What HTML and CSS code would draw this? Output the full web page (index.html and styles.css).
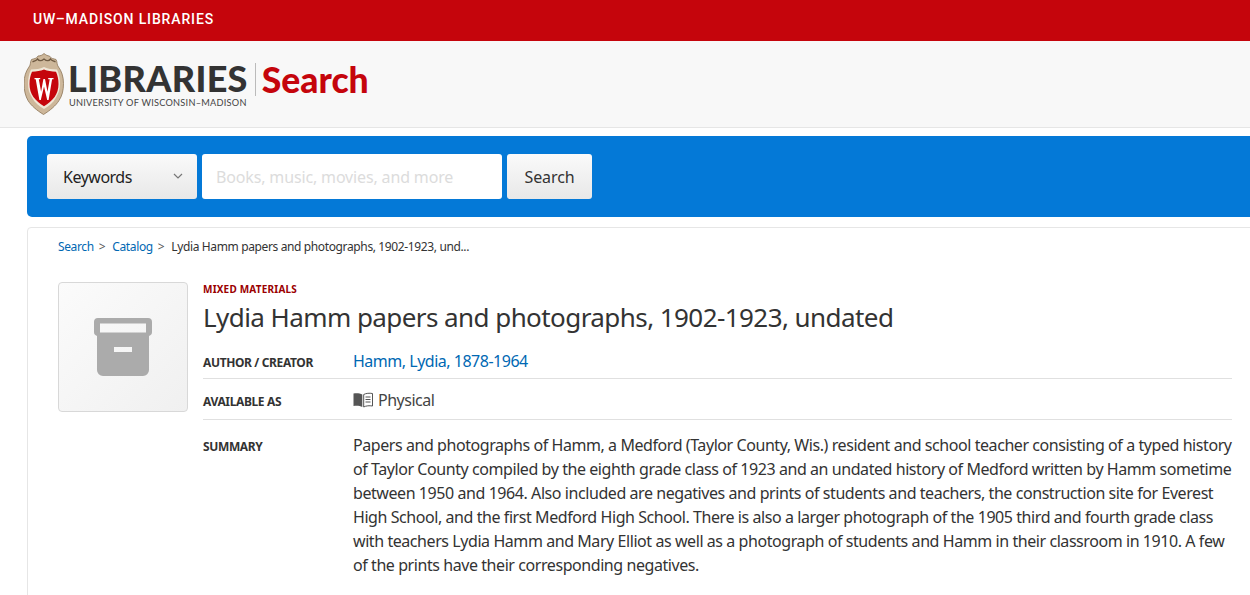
FILE: index.html
```html
<!DOCTYPE html>
<html lang="en">
<head>
<meta charset="utf-8">
<title>Lydia Hamm papers and photographs, 1902-1923, undated</title>
<link rel="stylesheet" href="styles.css">
</head>
<body>
<div class="topbar"><a class="topbar-link" href="#">UW–MADISON LIBRARIES</a></div>
<header class="site-header">
  <a class="logo" href="#">
    <svg class="crest" viewBox="0 0 40 62" width="40" height="62" aria-hidden="true">
      <path d="M20 .5c2 1.500 3.500 2.500 5.500 2.500 1.500 3 4 2.500 6.500 3.500 1.500 2.500 .5 5 2.500 7.500 3 4 5 9.500 5 16.500 0 7-1.500 12.500-4.500 17-3 5-9 10-15.500 14-6.500-4-12.500-9-15.500-14C1.500 43 0 37.500 0 30.500 0 23.500 2 18 5 14c2-2.500 1-5 2.500-7.500C10 5.500 12.500 6 14 3c2.500 0 4.500-1 6-2.500z" fill="#cdb79a" stroke="#8b7355" stroke-width=".8"/>
      <path d="M8.500 9c2-1.500 4-1 5-3 1.500 2 3.500 2.500 6.500 0 3 2.500 5 2 6.500 0 1 2 3 1.500 5 3" fill="none" stroke="#6f5a42" stroke-width="1.300"/>
      <path d="M20 14c4 1.800 8 2.500 13 2.500 2 4 3 9 3 14 0 5.500-1.300 10-4.300 14.500C29 50 25 53 20 56c-5-3-9-6-11.700-11C5.300 40.500 4 36 4 30.500c0-5 1-10 3-14 5 0 9-.7 13-2.500z" fill="#efe6d6"/>
      <path d="M20 16.500c3.500 1.500 7.500 2 12 2.200 1.600 3.500 2.500 7.500 2.500 12.300 0 5-1.300 9.200-3.900 13C28 47.500 24.200 50.700 20 53.300c-4.200-2.600-8-5.800-10.600-9.300C6.800 40.200 5.500 36 5.500 31c0-4.800.9-8.800 2.500-12.300 4.500-.2 8.500-.7 12-2.200z" fill="#c5050c"/>
      <path d="M10.500 25h5.700v1.300h-1.400l2.300 12.500 2.300-12.800h1.600l2.500 12.800 2.200-12.500h-1.500V25h5.300v1.300h-1.400L24.600 47h-1.400L20 33.500 16.800 47h-1.400L11.700 26.300h-1.200z" fill="#fff"/>
    </svg>
    <span class="wordmark">
      <span class="wordmark-main">LIBRARIES</span>
      <span class="wordmark-sub">UNIVERSITY OF WISCONSIN–MADISON</span>
    </span>
    <span class="logo-search">Search</span>
  </a>
</header>
<main class="page">
  <form class="searchbar">
    <div class="select"><span>Keywords</span>
      <svg class="chevron" viewBox="0 0 10 6" width="10" height="6" aria-hidden="true"><path d="M1 1l4 4 4-4" fill="none" stroke="#777" stroke-width="1.200"/></svg>
    </div>
    <div class="input">Books, music, movies, and more</div>
    <div class="button">Search</div>
  </form>
  <section class="card">
    <nav class="crumbs">
      <a href="#">Search</a><span class="sep">&gt;</span><a href="#">Catalog</a><span class="sep">&gt;</span><span>Lydia Hamm papers and photographs, 1902-1923, und...</span>
    </nav>
    <div class="record">
      <div class="thumb">
        <svg viewBox="0 1 60 60" width="60" height="60" aria-hidden="true">
          <path fill-rule="evenodd" d="M5 2h50a4 4 0 0 1 4 4v10a4 4 0 0 1-3 3.900V54a6 6 0 0 1-6 6H10a6 6 0 0 1-6-6V19.900A4 4 0 0 1 1 16V6a4 4 0 0 1 4-4zm2 5.500v9h46v-9zM21 31v5h18v-5z" fill="#ababab"/>
        </svg>
      </div>
      <div class="details">
        <div class="format">MIXED MATERIALS</div>
        <h1 class="title">Lydia Hamm papers and photographs, 1902-1923, undated</h1>
        <div class="row row-author">
          <div class="label">AUTHOR / CREATOR</div>
          <div class="value"><a href="#">Hamm, Lydia, 1878-1964</a></div>
        </div>
        <div class="row row-avail">
          <div class="label">AVAILABLE AS</div>
          <div class="value value-icon">
            <svg viewBox="0 0 20 16" width="20" height="16" aria-hidden="true">
              <path d="M9.300 2.500C7 1.200 3.500 1 .5 1.500V14c3-.5 6.500-.3 8.800 1z" fill="#555"/>
              <path d="M10.700 2.500C13 1.200 16.500 1 19.500 1.500V14c-3-.5-6.500-.3-8.800 1z" fill="none" stroke="#555"/>
              <path d="M12.500 5h5M12.500 7.500h5M12.500 10h5" stroke="#555"/>
            </svg>
            <span>Physical</span>
          </div>
        </div>
        <div class="row row-summary">
          <div class="label">SUMMARY</div>
          <div class="value summary-text">Papers and photographs of Hamm, a Medford (Taylor County, Wis.) resident and school teacher consisting of a typed history of Taylor County compiled by the eighth grade class of 1923 and an undated history of Medford written by Hamm sometime between 1950 and 1964. Also included are negatives and prints of students and teachers, the construction site for Everest High School, and the first Medford High School. There is also a larger photograph of the 1905 third and fourth grade class with teachers Lydia Hamm and Mary Elliot as well as a photograph of students and Hamm in their classroom in 1910. A few of the prints have their corresponding negatives.</div>
        </div>
      </div>
    </div>
  </section>
</main>
</body>
</html>
```
FILE: styles.css
```css
* { box-sizing: border-box; }
html, body { margin: 0; height: 595px; overflow: hidden; }
body { font-family: "Noto Sans", sans-serif; color: #333; background: #fff; font-size: 16px; line-height: 24px; letter-spacing: -.49px; }
a { color: #0068b3; text-decoration: none; }
.topbar { height: 41px; background: #c5050c; padding-left: 33px; display: flex; align-items: center; }
.topbar-link { font-family: "Roboto", sans-serif; color: #fff; font-size: 14px; letter-spacing: .85px; font-weight: 500; position: relative; top: -2px; }
.site-header { height: 87px; background: #f8f8f8; border-bottom: 1px solid #e6e6e6; padding: 12px 0 0 24px; }
.logo { display: flex; align-items: flex-start; }
.crest { flex: none; }
.wordmark { display: flex; flex-direction: column; margin-left: 4px; padding-top: 7px; letter-spacing: 0; }
.wordmark-main { font-family: "Lato", sans-serif; font-weight: 900; font-size: 36px; line-height: 36px; color: #333; letter-spacing: .3px; }
.wordmark-sub { font-family: "Lato", sans-serif; font-size: 9.200px; line-height: 10px; color: #444; letter-spacing: .25px; margin-top: 2px; padding-left: 1px; }
.logo-search { font-family: "Lato", sans-serif; font-weight: 900; font-size: 35.500px; line-height: 34px; letter-spacing: 0; color: #c5050c; border-left: 1px solid #bbb; margin: 10px 0 0 7px; padding-left: 6px; height: 33px; display: block; }
.page { padding-left: 27px; margin-right: -20px; }
.searchbar { margin-top: 8px; height: 81px; background: #0479d7; border-radius: 5px 0 0 5px; padding: 18px 20px; display: flex; gap: 5px; }
.select, .button { height: 45px; border-radius: 3px; background: linear-gradient(#fafafa, #e8e8e8); display: flex; align-items: center; color: #222; }
.select { width: 150px; padding: 0 14px 0 16px; justify-content: space-between; }
.chevron { margin-top: -1px; }
.input { width: 300px; height: 45px; background: #fff; border-radius: 3px; padding: 0 14px; display: flex; align-items: center; color: #dcdcdc; letter-spacing: -.15px; }
.button { width: 85px; justify-content: center; letter-spacing: -.1px; color: #333; }
.card { margin-top: 10px; border: 1px solid #e6e6e6; border-radius: 4px 0 0 0; padding: 9px 0 0 30px; height: 400px; }
.crumbs { font-size: 12px; line-height: 20px; color: #333; display: flex; letter-spacing: -.37px; }
.sep { margin: 0 7px 0 5px; color: #555; }
.record { display: flex; margin-top: 25px; gap: 15px; }
.thumb { flex: none; width: 130px; height: 130px; border: 1px solid #d8d8d8; border-radius: 4px; background: linear-gradient(135deg, #fbfbfb, #f0f0f0); display: flex; align-items: center; justify-content: center; }
.details { width: 1029px; }
.format { font-size: 10px; font-weight: 700; color: #9b0000; line-height: 14px; letter-spacing: .2px; }
.title { margin: 1px 0 0; font-size: 26px; font-weight: 400; line-height: 40px; color: #333; letter-spacing: -.57px; }
.row { display: flex; }
.label { flex: none; width: 150px; font-size: 12px; font-weight: 700; color: #333; letter-spacing: -.37px; }
.value { flex: 1; }
.summary-text { letter-spacing: -.43px; }
.row-author { border-bottom: 1px solid #e0e0e0; height: 42px; padding-top: 12px; }
.row-author .label { padding-top: 2px; }
.row-avail .label { padding-top: 2px; }
.row-avail { border-bottom: 1px solid #e0e0e0; height: 41px; padding-top: 9px; }
.value-icon { display: flex; align-items: center; gap: 5px; height: 24px; color: #444; }
.row-summary { padding-top: 13px; }
.row-summary .label { padding-top: 2px; }
```
